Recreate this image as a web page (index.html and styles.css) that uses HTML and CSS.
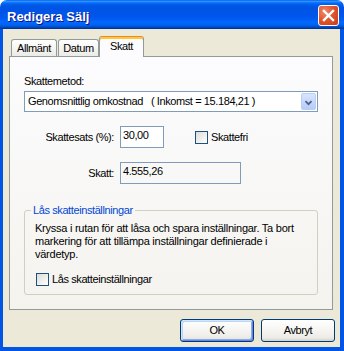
FILE: index.html
```html
<!DOCTYPE html>
<html lang="sv">
<head>
  <meta charset="UTF-8">
  <title>Redigera Sälj</title>
  <link rel="stylesheet" href="styles.css">
</head>
<body>
<div class="window">
  <div class="titlebar">
    <span class="title">Redigera Sälj</span>
    <span class="close">
      <svg width="19" height="19" viewBox="0 0 19 19">
        <path d="M5 5 L14 14 M14 5 L5 14" stroke="#fff" stroke-width="2.4" stroke-linecap="square"/>
      </svg>
    </span>
  </div>

  <div class="client">
    <div class="tabs">
      <div class="tab tab-allmant">Allmänt</div>
      <div class="tab tab-datum">Datum</div>
      <div class="tab tab-skatt active">Skatt</div>
    </div>

    <div class="page">
      <div class="caption">Skattemetod:</div>
      <div class="combo">
        <span class="combo-text">Genomsnittlig omkostnad&nbsp;&nbsp; ( Inkomst = 15.184,21 )</span>
        <span class="drop">
          <svg width="15" height="17" viewBox="0 0 15 17">
            <path d="M4 7 L7.5 10.5 L11 7" fill="none" stroke="#4d6185" stroke-width="2"/>
          </svg>
        </span>
      </div>

      <div class="row row-rate">
        <span class="field-label">Skattesats (%):</span>
        <div class="edit edit-rate">30,00</div>
        <div class="check check-free"><span class="box"></span>Skattefri</div>
      </div>

      <div class="row row-tax">
        <span class="field-label">Skatt:</span>
        <div class="edit edit-tax readonly">4.555,26</div>
      </div>

      <fieldset class="group">
        <legend>Lås skatteinställningar</legend>
        <p class="hint">Kryssa i rutan för att låsa och spara inställningar. Ta bort markering för att tillämpa inställningar definierade i värdetyp.</p>
        <div class="check check-lock"><span class="box"></span>Lås skatteinställningar</div>
      </fieldset>
    </div>

    <div class="buttons">
      <div class="btn default">OK</div>
      <div class="btn">Avbryt</div>
    </div>
  </div>
</div>
</body>
</html>
```

FILE: styles.css
```css
* {
  margin: 0;
  padding: 0;
  box-sizing: border-box;
}

body {
  width: 344px;
  height: 351px;
  overflow: hidden;
  background: #fff;
  font-family: "Liberation Sans", Arial, sans-serif;
  font-size: 11px;
  letter-spacing: -0.4px;
  color: #000;
}

.window {
  display: flex;
  flex-direction: column;
  width: 344px;
  height: 351px;
}

/* title bar */

.titlebar {
  display: flex;
  align-items: center;
  justify-content: space-between;
  height: 29px;
  padding: 1px 5px 0 7px;
  border-radius: 7px 7px 0 0;
  background: linear-gradient(to bottom,
    #0058ee 0%, #3593ff 4%, #288eff 6%, #127dff 8%, #036ffc 10%,
    #0262ee 14%, #0057e5 20%, #0054e3 24%, #0055eb 56%, #005bf5 66%,
    #026afe 76%, #0062ef 86%, #0052d6 92%, #0040ab 96%, #003092 100%);
}

.title {
  padding-top: 2px;
  color: #fff;
  font-size: 13px;
  font-weight: bold;
  letter-spacing: 0;
  text-shadow: 1px 1px #0f1089;
}

.close {
  display: flex;
  align-items: center;
  justify-content: center;
  width: 21px;
  height: 21px;
  border: 1px solid #fff;
  border-radius: 3px;
  background: radial-gradient(circle at 30% 30%, #f08a6a 0%, #e2552f 45%, #c8391a 100%);
}

/* client area */

.client {
  flex: 1;
  display: flex;
  flex-direction: column;
  padding: 7px 5px 0 6px;
  background: #ece9d8;
  border: solid #0055e5;
  border-width: 0 4px 4px 3px;
}

.tabs {
  display: flex;
  align-items: flex-end;
  height: 20px;
  padding-left: 2px;
}

.tab {
  height: 17px;
  padding-top: 1px;
  border: 1px solid #919b9c;
  border-bottom: 0;
  border-radius: 3px 3px 0 0;
  background: linear-gradient(#fff, #ecebe6);
  text-align: center;
  line-height: 15px;
}

.tab-allmant {
  width: 46px;
  margin-right: 1px;
}

.tab-datum {
  width: 41px;
}

.tab.active {
  position: relative;
  z-index: 1;
  width: 45px;
  height: 21px;
  margin-bottom: -1px;
  padding-top: 2px;
  border-top-color: #e68b2c;
  background: #fcfcfe;
  box-shadow: inset 0 2px #ffc73c;
}

.page {
  height: 254px;
  margin-right: 2px;
  padding: 18px 14px 0 14px;
  border: 1px solid #919b9c;
  background: linear-gradient(#fcfcfe, #f4f3ee);
}

.caption {
  line-height: 13px;
}

.combo {
  display: flex;
  align-items: center;
  justify-content: space-between;
  height: 21px;
  margin-top: 3px;
  padding-left: 3px;
  border: 1px solid #7f9db9;
  background: #fff;
  line-height: 13px;
}

.drop {
  display: flex;
  width: 15px;
  height: 17px;
  margin-right: 1px;
  border: 1px solid #b9cdf5;
  border-radius: 2px;
  background: linear-gradient(#d9e5fd, #b6cbf9);
}

.row {
  display: flex;
  align-items: center;
  height: 22px;
  line-height: 13px;
}

.row-rate {
  margin-top: 14px;
}

.row-tax {
  margin-top: 14px;
}

.field-label {
  width: 90px;
  margin-right: 6px;
  text-align: right;
}

.edit {
  height: 22px;
  padding: 2px 0 0 2px;
  border: 1px solid #7f9db9;
  background: #fff;
}

.edit-rate {
  width: 44px;
}

.edit-tax {
  width: 121px;
}

.edit.readonly {
  background: transparent;
}

.check {
  display: flex;
  align-items: center;
  line-height: 13px;
}

.box {
  width: 13px;
  height: 13px;
  margin-right: 3px;
  border: 1px solid #1c5180;
  background: linear-gradient(135deg, #dcdcd7, #fff);
}

.check-free {
  margin-left: 31px;
}

/* group box */

.group {
  margin-top: 20px;
  padding: 5px 10px 8px 10px;
  border: 1px solid #d0d0bf;
  border-radius: 3px;
}

.group legend {
  margin-left: -4px;
  padding: 0 2px;
  color: #0046d5;
  line-height: 13px;
}

.hint {
  line-height: 13px;
  letter-spacing: -0.25px;
}

.check-lock {
  margin-top: 12px;
  margin-left: 1px;
}

/* buttons */

.buttons {
  display: flex;
  justify-content: flex-end;
  gap: 7px;
  margin-top: 9px;
}

.btn {
  width: 74px;
  height: 23px;
  border: 1px solid #003c74;
  border-radius: 3px;
  background: linear-gradient(#fff 0%, #f3f2ee 60%, #ecebe6 85%, #d6d0c5 100%);
  text-align: center;
  line-height: 21px;
}

.btn.default {
  box-shadow: inset 1px 1px #cee7ff, inset -1px -1px #6982ee,
    inset 2px 2px #bcd4f6, inset -2px -2px #89ade4;
}
```
